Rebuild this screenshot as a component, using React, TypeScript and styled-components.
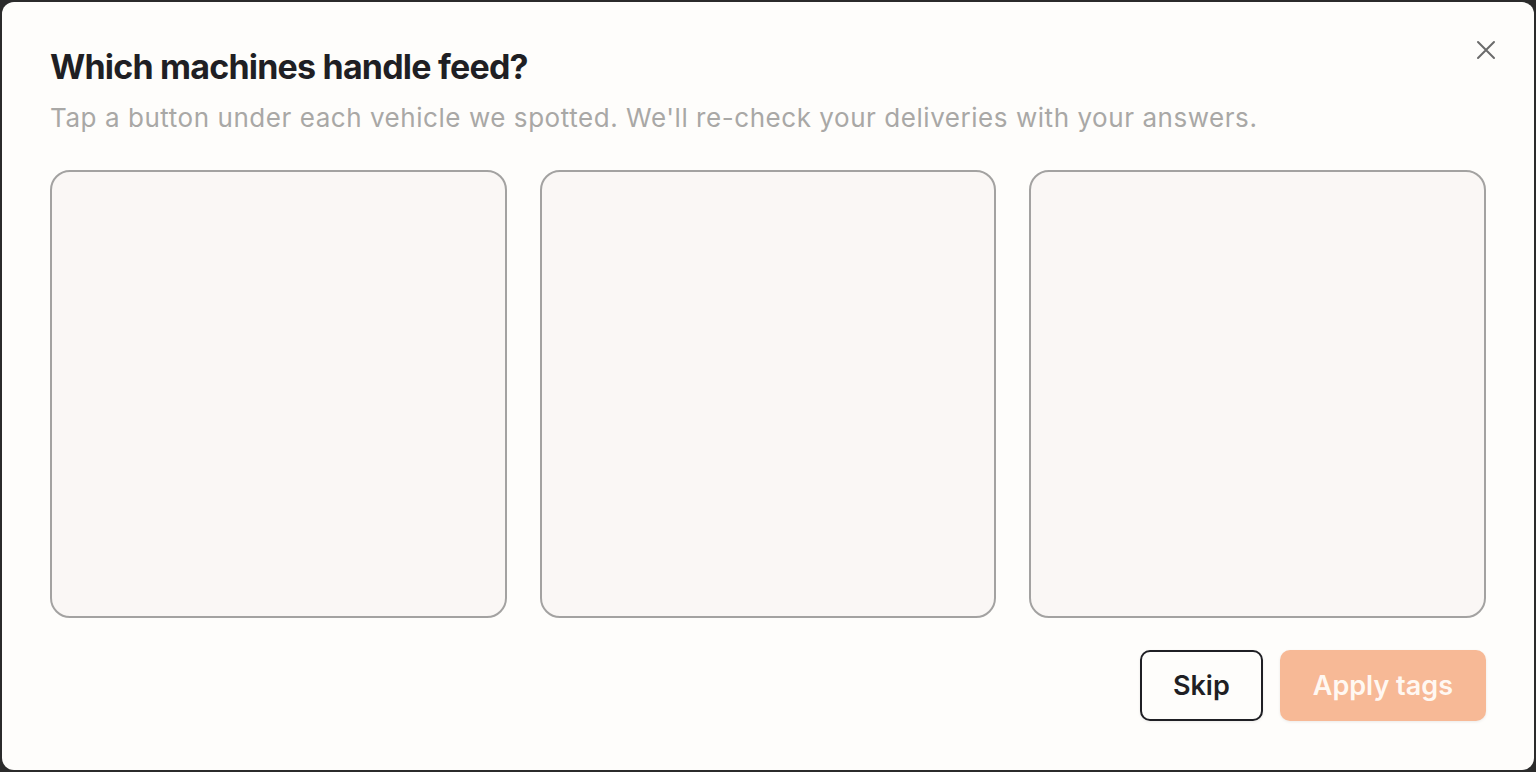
import styled, { createGlobalStyle } from 'styled-components';

const GlobalStyle = createGlobalStyle`
    html, body {
        margin: 0;
        padding: 0;
        background: #2b2b2b;
    }
    body {
        font-family: Inter, 'Noto Sans', sans-serif;
    }
`;

const Backdrop = styled.div`
    height: 100vh;
    box-sizing: border-box;
    padding: 2px;
    display: flex;
`;

const Modal = styled.div`
    position: relative;
    flex: 1;
    display: flex;
    flex-direction: column;
    background: #fefdfb;
    border-radius: 12px;
    padding: 43px 48px 48px 48px;
`;

const CloseButton = styled.button`
    position: absolute;
    top: 36px;
    right: 36px;
    width: 24px;
    height: 24px;
    padding: 0;
    border: none;
    background: none;
    color: #6b6b6b;
    display: flex;
    align-items: center;
    justify-content: center;
    cursor: pointer;
`;

const Title = styled.h2`
    margin: 0;
    font-size: 34px;
    font-weight: 700;
    color: #1f1f24;
    letter-spacing: -0.8px;
    line-height: 44px;
`;

const Subtitle = styled.p`
    margin: 12px 0 0 0;
    font-size: 26px;
    font-weight: 400;
    color: #a9a8a6;
    letter-spacing: 0.55px;
    line-height: 34px;
`;

const CardRow = styled.div`
    margin-top: 35px;
    display: grid;
    grid-template-columns: repeat(3, 1fr);
    gap: 33px;
`;

const Card = styled.div`
    height: 448px;
    box-sizing: border-box;
    border: 2px solid #a3a2a1;
    border-radius: 20px;
    background: #faf7f5;
`;

const Footer = styled.div`
    margin-top: 32px;
    display: flex;
    justify-content: flex-end;
    gap: 17px;
`;

const Button = styled.button<{ $primary?: boolean }>`
    height: 71px;
    box-sizing: border-box;
    padding: 0 31px;
    border-radius: 10px;
    font-family: Inter, 'Noto Sans', sans-serif;
    font-size: 27px;
    font-weight: 600;
    cursor: pointer;
    border: 2px solid ${(p) => (p.$primary ? 'transparent' : '#1f1f24')};
    background: ${(p) => (p.$primary ? '#f7b996' : '#fefdfb')};
    color: ${(p) => (p.$primary ? '#fff8f2' : '#1f1f24')};
    box-shadow: 0 1px 3px rgba(0, 0, 0, 0.08);
`;

const App = () => {
    return (
        <>
            <GlobalStyle />
            <Backdrop>
                <Modal>
                    <CloseButton aria-label="Close">
                        <svg width="20" height="20" viewBox="0 0 20 20" fill="none">
                            <path d="M2 2L18 18M18 2L2 18" stroke="currentColor" strokeWidth="2" strokeLinecap="round" />
                        </svg>
                    </CloseButton>
                    <Title>Which machines handle feed?</Title>
                    <Subtitle>Tap a button under each vehicle we spotted. We'll re-check your deliveries with your answers.</Subtitle>
                    <CardRow>
                        <Card />
                        <Card />
                        <Card />
                    </CardRow>
                    <Footer>
                        <Button>Skip</Button>
                        <Button $primary>Apply tags</Button>
                    </Footer>
                </Modal>
            </Backdrop>
        </>
    );
};

export default App;
